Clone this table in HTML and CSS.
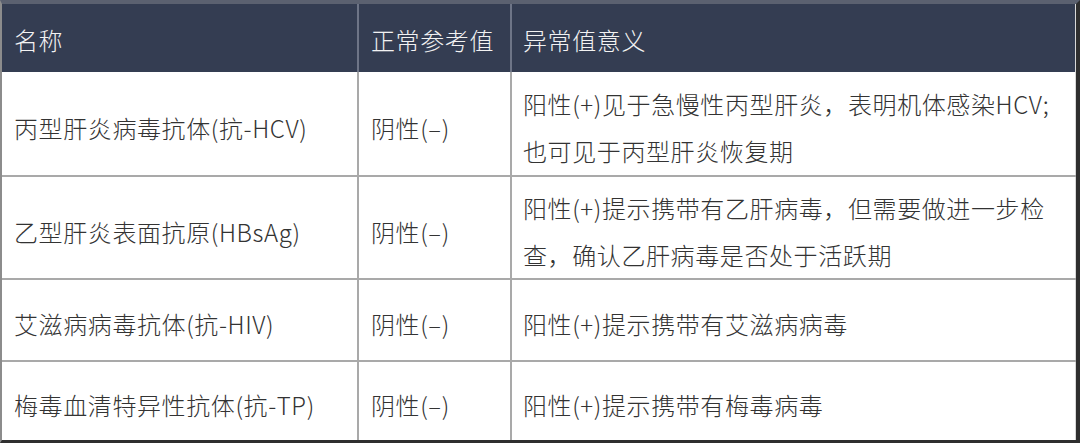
FILE: index.html
```html
<!DOCTYPE html>
<html lang="zh-CN">
<head>
<meta charset="utf-8">
<link rel="stylesheet" href="styles.css">
</head>
<body>
<div class="table">
  <div class="row head">
    <div class="cell">名称</div>
    <div class="cell">正常参考值</div>
    <div class="cell">异常值意义</div>
  </div>
  <div class="row body r1">
    <div class="cell">丙型肝炎病毒抗体(抗-HCV)</div>
    <div class="cell">阴性(–)</div>
    <div class="cell multi">阳性(+)见于急慢性丙型肝炎，表明机体感染HCV;<br>也可见于丙型肝炎恢复期</div>
  </div>
  <div class="row body r2">
    <div class="cell">乙型肝炎表面抗原(HBsAg)</div>
    <div class="cell">阴性(–)</div>
    <div class="cell multi">阳性(+)提示携带有乙肝病毒，但需要做进一步检<br>查，确认乙肝病毒是否处于活跃期</div>
  </div>
  <div class="row body r3">
    <div class="cell">艾滋病病毒抗体(抗-HIV)</div>
    <div class="cell">阴性(–)</div>
    <div class="cell">阳性(+)提示携带有艾滋病病毒</div>
  </div>
  <div class="row body r4">
    <div class="cell">梅毒血清特异性抗体(抗-TP)</div>
    <div class="cell">阴性(–)</div>
    <div class="cell">阳性(+)提示携带有梅毒病毒</div>
  </div>
</div>
</body>
</html>
```
FILE: styles.css
```css
html, body {
  margin: 0;
  padding: 0;
  background: #ffffff;
}
body {
  width: 1080px;
  height: 443px;
  overflow: hidden;
  font-family: "Noto Sans CJK SC", "Noto Sans", sans-serif;
  font-size: 24px;
  font-weight: 300;
  letter-spacing: 0.6px;
  color: #333333;
}
.table {
  width: 1080px;
  height: 443px;
  box-sizing: border-box;
  border-top: 4px solid #5b6170;
  border-left: 2px solid #8c8c8c;
  border-right: 4px solid #2f2f2f;
  border-bottom: 3px solid #2f2f2f;
  display: flex;
  flex-direction: column;
}
.row {
  display: grid;
  grid-template-columns: 355px 151px 1fr;
  column-gap: 2px;
  background: #a9a9a9;
}
.head {
  height: 68px;
  background: #6e7587;
}
.head .cell {
  background: #343d52;
  color: #f2f2f2;
  padding-top: 4px;
}
.body {
  border-top: 2px solid #a9a9a9;
}
.r1 { border-top: 0; height: 103px; }
.r2 { height: 101px; }
.r3 { height: 80px; }
.r4 { height: 78px; }
.cell {
  background: #ffffff;
  display: flex;
  align-items: center;
  padding-left: 12px;
  line-height: 30px;
  white-space: nowrap;
}
.body .cell {
  padding-top: 8px;
  box-sizing: border-box;
}
.cell.multi {
  line-height: 47px;
  padding-top: 6px;
}
.head .cell:last-child,
.body .cell:last-child {
  padding-left: 11px;
  border-right: 1px solid #d8d8d8;
}
```
